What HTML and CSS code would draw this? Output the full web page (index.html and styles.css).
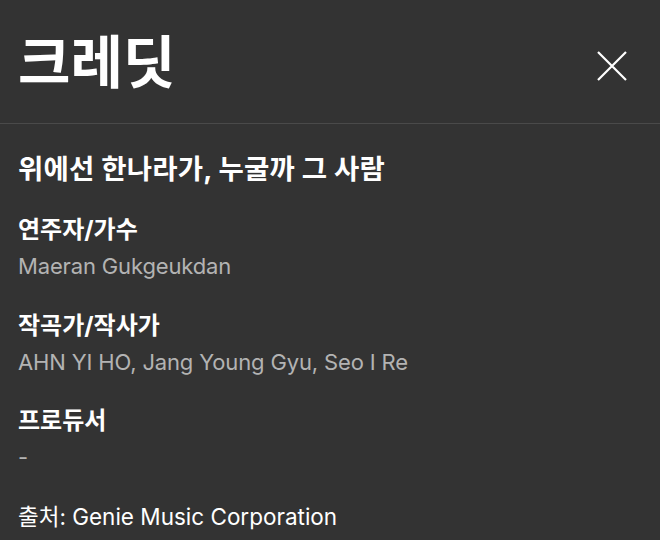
FILE: index.html
```html
<!DOCTYPE html>
<html lang="ko">
<head>
<meta charset="utf-8">
<link rel="stylesheet" href="styles.css">
</head>
<body>
<div class="dialog">
  <header class="head">
    <h1 class="title">크레딧</h1>
    <button class="close" aria-label="닫기">
      <svg width="32" height="32" viewBox="0 0 32 32"><path d="M2 2L30 30M30 2L2 30" stroke="#fff" stroke-width="2.2" fill="none"/></svg>
    </button>
  </header>
  <main class="body">
    <h2 class="song">위에선 한나라가, 누굴까 그 사람</h2>
    <section class="group">
      <h3 class="label">연주자/가수</h3>
      <p class="value">Maeran Gukgeukdan</p>
    </section>
    <section class="group">
      <h3 class="label">작곡가/작사가</h3>
      <p class="value">AHN YI HO, Jang Young Gyu, Seo I Re</p>
    </section>
    <section class="group">
      <h3 class="label">프로듀서</h3>
      <p class="value">-</p>
    </section>
    <p class="source">출처: Genie Music Corporation</p>
  </main>
</div>
</body>
</html>
```
FILE: styles.css
```css
html, body {
  margin: 0;
  padding: 0;
  background: #333333;
}
body {
  font-family: Inter, "Noto Sans CJK KR", sans-serif;
  color: #ffffff;
}
.dialog {
  width: 660px;
  height: 540px;
  overflow: hidden;
}
.head {
  display: flex;
  align-items: center;
  justify-content: space-between;
  height: 124px;
  padding: 8px 32px 0 18px;
  box-sizing: border-box;
  border-bottom: 1px solid #4a4a4a;
}
.title {
  margin: 0;
  font-size: 57px;
  font-weight: 700;
  line-height: 1;
  letter-spacing: 0;
  padding-bottom: 6px;
}
.close {
  background: none;
  border: 0;
  padding: 0;
  width: 32px;
  height: 32px;
  display: flex;
  cursor: pointer;
}
.body {
  padding: 27px 18px 0;
}
.song {
  margin: 0 0 25px;
  font-size: 27.5px;
  font-weight: 700;
  line-height: 36px;
  letter-spacing: 0.2px;
}
.group {
  margin-bottom: 23.5px;
}
.label {
  margin: 0;
  font-size: 24px;
  font-weight: 700;
  line-height: 36px;
}
.value {
  margin: 0;
  font-size: 22px;
  line-height: 36px;
  color: #b3b3b3;
  letter-spacing: -0.15px;
}
.source {
  margin: 0;
  font-size: 22.5px;
  line-height: 36px;
  color: #ffffff;
}
```
